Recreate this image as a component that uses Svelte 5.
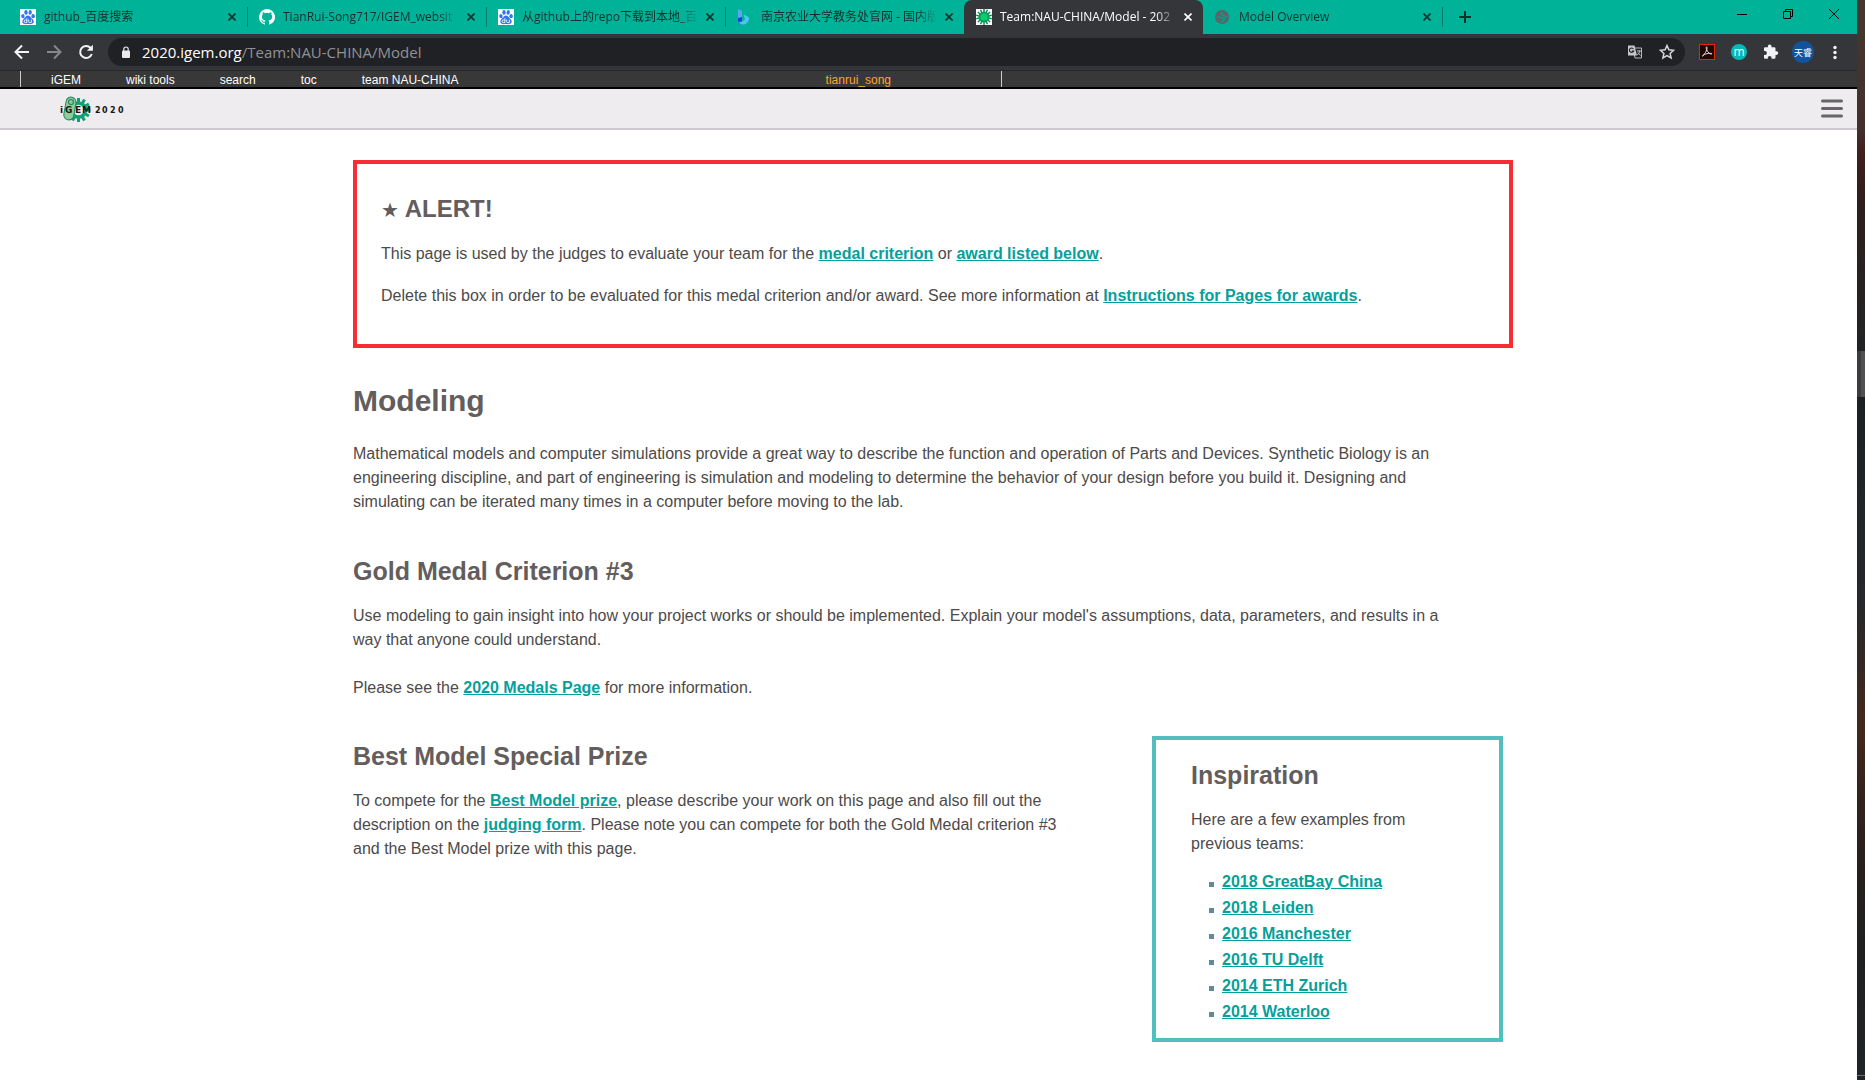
<script>
  const tabs = [
    { title: 'github_百度搜索', icon: 'paw' },
    { title: 'TianRui-Song717/IGEM_websit', icon: 'octo' },
    { title: '从github上的repo下载到本地_百', icon: 'paw' },
    { title: '南京农业大学教务处官网 - 国内版', icon: 'bing' },
    { title: 'Team:NAU-CHINA/Model - 202', icon: 'virus', active: true },
    { title: 'Model Overview', icon: 'globe' }
  ];
  const wikiLinks = ['iGEM', 'wiki tools', 'search', 'toc', 'team NAU-CHINA'];
  const examples = [
    '2018 GreatBay China',
    '2018 Leiden',
    '2016 Manchester',
    '2016 TU Delft',
    '2014 ETH Zurich',
    '2014 Waterloo'
  ];
  const spikes = Array.from({ length: 14 }, (_, i) => (i * 360) / 14);
  const teeth = Array.from({ length: 12 }, (_, i) => i * 30);
</script>

<div class="screen">
  <div class="window">
    <div class="tabstrip">
      <div class="tabs">
        {#each tabs as tab}
          <div class="tab" class:active={tab.active}>
            <svg class="favicon" viewBox="0 0 16 16" aria-hidden="true">
              {#if tab.icon === 'paw'}
                <rect width="16" height="16" fill="#fff" />
                <g fill="#3275ec">
                  <ellipse cx="2.9" cy="7.2" rx="1.7" ry="2.1" transform="rotate(-12 2.9 7.2)" />
                  <ellipse cx="6" cy="3.4" rx="1.7" ry="2.3" />
                  <ellipse cx="10.2" cy="3.4" rx="1.6" ry="2.3" transform="rotate(12 10.2 3.4)" />
                  <ellipse cx="13.1" cy="7.2" rx="1.7" ry="2.1" />
                  <path d="M8 6.6c1.9 0 2.5 1.9 3.9 3 1.700 1.300 2.100 2.600 1.600 4-.7 1.900-2.900 1.500-5.500 1.500s-4.800.4-5.500-1.500c-.5-1.400 0-2.700 1.600-4C5.500 8.500 6.100 6.600 8 6.600z" />
                </g>
                <path d="M6.900 9.300v4.300H5.500q-1.400 0-1.400-1.300t1.400-1.300h1.300M8.700 10.600v2.100q0 .9.900.9h1.800v-3" fill="none" stroke="#fff" stroke-width=".9" />
              {:else if tab.icon === 'octo'}
                <path fill="#fff" d="M8 0a8 8 0 0 0-2.530 15.590c.4.070.550-.170.550-.380v-1.490c-2.010.370-2.530-.490-2.690-.940-.090-.230-.480-.940-.820-1.130-.280-.150-.680-.520-.010-.530.630-.010 1.080.580 1.230.820.720 1.210 1.870.870 2.330.660.070-.520.280-.870.510-1.070-1.780-.2-3.640-.890-3.640-3.950 0-.870.310-1.590.820-2.150-.080-.2-.360-1.020.080-2.120 0 0 .670-.210 2.200.820a7.600 7.600 0 0 1 4 0c1.530-1.040 2.200-.820 2.200-.820.440 1.100.160 1.920.080 2.120.510.560.820 1.270.820 2.150 0 3.070-1.870 3.750-3.650 3.950.290.250.540.730.540 1.480v2.200c0 .210.150.460.550.380A8 8 0 0 0 8 0z" />
              {:else if tab.icon === 'bing'}
                <path d="M1 0l4 2v11.500L1 11z" fill="#5aa5f5" />
                <path d="M1 9l4-1v6l2 1.500q-5 .8-6-3.500z" fill="#1c3fdc" />
                <path d="M6.500 5.500l4 2q2.500 1.500 1 4.500-2 3.500-6.500 3.800-3-.8-3.500-3 3 1 6.500-2.300z" fill="#4cc6ee" />
              {:else if tab.icon === 'virus'}
                <rect width="16" height="16" fill="#fff" />
                {#each spikes as a}
                  <path d="M8 0v4" stroke="#0c8f5c" stroke-width="1.500" transform="rotate({a} 8 8)" />
                {/each}
                <circle cx="8" cy="8" r="5.600" fill="#0c9c60" />
                <circle cx="8" cy="8" r="3.600" fill="#07cf70" />
              {:else}
                <circle cx="7" cy="8" r="7" fill="#5f6368" />
                <path d="M2 8h3.500l1.500 1.500h2.500q0 2.500-2.500 3l-1.500 1" fill="none" stroke="#00a088" stroke-width="1.600" />
                <path d="M7.500 3q-2.500 2 0 3t1.500 1.500 3.500.5" fill="none" stroke="#00a088" stroke-width="1.600" />
              {/if}
            </svg>
            <span class="title">{tab.title}</span>
            <button class="close" aria-label="Close tab">
              <svg viewBox="0 0 8 8"><path d="M.5.5l7 7M7.500.5l-7 7" /></svg>
            </button>
          </div>
        {/each}
        <button class="newtab" aria-label="New tab">
          <svg viewBox="0 0 12 12"><path d="M6 0v12M0 6h12" /></svg>
        </button>
      </div>
      <div class="controls">
        <button aria-label="Minimize"><svg viewBox="0 0 12 12"><path d="M1 6.500h10" /></svg></button>
        <button aria-label="Restore"><svg viewBox="0 0 12 12"><path d="M1.500 3.500h7v7h-7zM3.500 3.500v-2h7v7h-2" /></svg></button>
        <button aria-label="Close"><svg viewBox="0 0 12 12"><path d="M1 1l10 10M11 1L1 11" /></svg></button>
      </div>
    </div>

    <div class="toolbar">
      <button class="nav" aria-label="Back"><svg viewBox="0 0 16 16"><path d="M15 8H2M8 1.500L1.500 8 8 14.500" /></svg></button>
      <button class="nav dim" aria-label="Forward"><svg viewBox="0 0 16 16"><path d="M1 8h13M8 1.500L14.500 8 8 14.500" /></svg></button>
      <button class="nav" aria-label="Reload"><svg viewBox="0 0 16 16"><path d="M13.800 10A6 6 0 1 1 12.500 3.800L14 5.500" /><path d="M14.900.8v6H8.900z" class="solid" /></svg></button>
      <div class="omnibox">
        <svg class="lock" viewBox="0 0 10 13" aria-hidden="true"><rect x="1" y="4.500" width="8" height="7.500" rx="1" fill="#e8eaed" /><path d="M2.800 5V3.200a2.200 2.200 0 0 1 4.400 0V5" fill="none" stroke="#e8eaed" stroke-width="1.200" /></svg>
        <span class="url"><b>2020.igem.org</b>/Team:NAU-CHINA/Model</span>
        <button class="tool" aria-label="Translate">
          <svg viewBox="0 0 16 16">
            <path d="M6 4h8.500v10H8z" fill="none" stroke="#b5b7ba" />
            <path d="M1 1.500h6.500l2.500 10H1z" fill="#c4c6c8" />
            <path d="M6.500 5A2.200 2.200 0 1 0 6.700 7H4.800" fill="none" stroke="#202124" stroke-width="1.100" />
            <path d="M10 7h4M12 6v1M13 7q-.5 2.500-3 4M10.800 8.500l2.700 3" fill="none" stroke="#b5b7ba" />
          </svg>
        </button>
        <button class="tool" aria-label="Bookmark">
          <svg viewBox="0 0 16 16"><path d="M8 1.500l1.900 4.300 4.700.5-3.500 3.100 1 4.600L8 11.600 3.900 14l1-4.600L1.400 6.300l4.700-.5z" fill="none" stroke="#d5d7da" stroke-width="1.500" /></svg>
        </button>
      </div>
      <div class="extensions">
        <button class="tool" aria-label="PDF"><svg viewBox="0 0 16 16"><rect x=".5" y=".5" width="15" height="15" fill="#210503" stroke="#e02508" /><path d="M3 12.500c2-1 5.500-6.500 5-9.300-.8-.9-1.200.6-.3 2.600 1.100 2.600 3.300 4.700 5.300 4.200.5-1.200-6.500-.8-9.300 1.400" fill="none" stroke="#ddd" /></svg></button>
        <button class="tool badge" aria-label="Extension">m</button>
        <button class="tool" aria-label="Extensions"><svg viewBox="0 0 16 16"><path d="M13.500 7.300h-1V4.600q0-1.300-1.300-1.300H8.500v-1a1.800 1.800 0 0 0-3.600 0v1H2.300Q1 3.300 1 4.600v2.500h1a1.900 1.900 0 0 1 0 3.800H1v2.600q0 1.300 1.300 1.300h2.500v-1a1.900 1.900 0 0 1 3.800 0v1h2.600q1.300 0 1.300-1.300v-2.600h1a1.800 1.800 0 0 0 0-3.600z" fill="#f1f3f4" /></svg></button>
        <button class="tool avatar" aria-label="Profile">天睿</button>
        <button class="tool" aria-label="Menu"><svg viewBox="0 0 16 16"><g fill="#f1f3f4"><circle cx="8" cy="3.500" r="1.700" /><circle cx="8" cy="8.500" r="1.700" /><circle cx="8" cy="13.500" r="1.700" /></g></svg></button>
      </div>
    </div>

    <nav class="wikibar">
      <div class="wikiinner">
        <div class="wikilinks">
          {#each wikiLinks as label}<a href="#top">{label}</a>{/each}
        </div>
        <a class="user" href="#user">tianrui_song</a>
      </div>
    </nav>

    <header class="sitebar">
      <a class="logo" href="#home" aria-label="iGEM 2020">
        <svg viewBox="0 0 66 26">
          <g fill="#10a074">
            {#each teeth as a}
              <rect x="17" y="2" width="3" height="6" transform="rotate({a} 18.500 14)" />
            {/each}
          </g>
          <circle cx="18.500" cy="14" r="7" fill="none" stroke="#10a074" stroke-width="3.500" />
          <rect x="5" y="1" width="10" height="23" rx="5" fill="#8fcb9b" stroke="#24875a" transform="rotate(10 10 12)" />
          <circle cx="11" cy="6" r="2.500" fill="none" stroke="#24875a" stroke-width="1.200" />
          <g fill="#161616" font-family="DejaVu Sans, sans-serif" font-weight="700" font-size="9">
            <text x="0" y="17">i</text><text x="5" y="17">G</text><text x="15" y="17">E</text><text x="22" y="17">M</text>
          </g>
          <g fill="#161616" font-family="DejaVu Sans, sans-serif" font-weight="700" font-size="8">
            <text x="35" y="17">2</text><text x="42" y="17">0</text><text x="50" y="17">2</text><text x="58" y="17">0</text>
          </g>
        </svg>
      </a>
      <button class="burger" aria-label="Open menu"><svg viewBox="0 0 22 19"><path d="M1.500 2h19M1.500 9.500h19M1.500 17h19" /></svg></button>
    </header>

    <main>
      <section class="alert">
        <h2><span class="star">★</span> ALERT!</h2>
        <p>This page is used by the judges to evaluate your team for the <a href="#medal">medal criterion</a> or <a href="#award">award listed below</a>.</p>
        <p>Delete this box in order to be evaluated for this medal criterion and/or award. See more information at <a href="#instructions">Instructions for Pages for awards</a>.</p>
      </section>

      <section class="intro">
        <h1>Modeling</h1>
        <p>Mathematical models and computer simulations provide a great way to describe the function and operation of Parts and Devices. Synthetic Biology is an engineering discipline, and part of engineering is simulation and modeling to determine the behavior of your design before you build it. Designing and simulating can be iterated many times in a computer before moving to the lab.</p>
      </section>

      <section class="gold">
        <h2>Gold Medal Criterion #3</h2>
        <p>Use modeling to gain insight into how your project works or should be implemented. Explain your model's assumptions, data, parameters, and results in a way that anyone could understand.<br /><br />Please see the <a href="#medals">2020 Medals Page</a> for more information.</p>
      </section>

      <div class="columns">
        <section class="prize">
          <h2>Best Model Special Prize</h2>
          <p>To compete for the <a href="#prize">Best Model prize</a>, please describe your work on this page and also fill out the description on the <a href="#form">judging form</a>. Please note you can compete for both the Gold Medal criterion #3 and the Best Model prize with this page.</p>
        </section>
        <aside>
          <h2>Inspiration</h2>
          <p>Here are a few examples from previous teams:</p>
          <ul>
            {#each examples as name}<li><a href="#example">{name}</a></li>{/each}
          </ul>
        </aside>
      </div>
    </main>
  </div>
  <div class="desktop"><div class="peek"></div><div class="edge"></div></div>
</div>

<style>
  :global(body) { margin: 0; background: #fff; }
  * { box-sizing: border-box; }
  button { border: 0; padding: 0; margin: 0; background: none; color: inherit; font: inherit; display: flex; align-items: center; justify-content: center; }
  svg { display: block; }
  .screen { display: flex; min-height: 100vh; font-family: "Liberation Sans", Arial, sans-serif; }
  .window { flex: 1; min-width: 0; background: #fff; }
  .desktop { display: flex; flex-direction: column; justify-content: space-between; width: 8px; padding: 351px 0 4px; background: linear-gradient(#45372f 0, #43302a 130px, #401f1c 155px, #2e1e1c 200px, #232324 330px, #1c2025 400px, #25272b 600px, #42281c 720px, #2a1f1c 850px, #1f1f20 950px, #202426 100%); }
  .peek { height: 46px; background: #505052; border-left: 4px solid #3c3c3e; }
  .edge { height: 1px; background: #6c7072; }

  .tabstrip, .toolbar { font-family: "Open Sans", "Noto Sans CJK SC", sans-serif; }
  .tabstrip { display: flex; justify-content: space-between; height: 34px; background: #00b398; color: #15302c; }
  .tabs { display: flex; padding-left: 8px; min-width: 0; }
  .tab { position: relative; display: flex; align-items: center; width: 239px; height: 34px; padding: 0 7px 0 12px; font-size: 12px; }
  .tab::after { content: ""; position: absolute; right: -1px; top: 7px; width: 1px; height: 20px; background: #087c6c; }
  .tab.active { background: #35363a; color: #fff; border-radius: 8px 8px 0 0; }
  .tab.active::after, .tab:has(+ .active)::after { display: none; }
  .favicon { width: 16px; height: 16px; flex: none; }
  .title { flex: 1; margin: 0 4px 0 8px; overflow: hidden; white-space: nowrap; line-height: 20px; mask-image: linear-gradient(to right, #000 calc(100% - 20px), transparent); }
  .close { width: 16px; height: 16px; flex: none; }
  .close svg { width: 8px; height: 8px; }
  .close path { stroke: currentColor; stroke-width: 1.6; }
  .newtab { width: 46px; }
  .newtab svg { width: 12px; height: 12px; }
  .newtab path { stroke: currentColor; stroke-width: 2; }
  .controls { display: flex; height: 28px; }
  .controls button { width: 46px; }
  .controls svg { width: 12px; height: 12px; }
  .controls path { stroke: #000; fill: none; }

  .toolbar { display: flex; align-items: center; height: 36px; padding: 0 6px; background: #35363a; }
  .nav { width: 32px; height: 28px; }
  .nav svg { width: 16px; height: 16px; }
  .nav path { fill: none; stroke: #f1f3f4; stroke-width: 2; }
  .nav.dim path { stroke: #86888b; }
  .nav path.solid { fill: #f1f3f4; stroke: none; }
  .omnibox { flex: 1; display: flex; align-items: center; height: 28px; margin: 0 6px; padding: 0 2px 0 13px; border-radius: 14px; background: #202124; }
  .lock { width: 10px; height: 13px; margin-right: 11px; }
  .url { flex: 1; font-size: 15px; line-height: 20px; color: #8f9296; }
  .url b { font-weight: 400; color: #fff; }
  .tool { width: 32px; height: 28px; }
  .tool svg { width: 16px; height: 16px; }
  .extensions { display: flex; align-items: center; }
  .badge { width: 16px; height: 16px; margin: 0 8px; border-radius: 8px; background: #06b8b8; color: #fff; font-size: 12px; line-height: 14px; }
  .avatar { width: 22px; height: 22px; margin: 0 5px; border-radius: 11px; background: #11549c; color: #fff; font-size: 9px; }

  .wikibar { height: 19px; background: #383838; border-top: 1px solid #282828; border-bottom: 2px solid #000; padding-left: 20px; font-size: 12px; line-height: 18px; }
  .wikiinner { display: flex; justify-content: space-between; width: 982px; max-width: 100%; height: 16px; border: 0 solid #ccc; border-width: 0 1px; padding: 0 110px 0 30px; }
  .wikilinks { display: flex; gap: 45px; }
  .wikibar a { color: #fff; text-decoration: none; }
  .wikibar .user { color: #f9a72b; }

  .sitebar { display: flex; justify-content: space-between; align-items: center; height: 41px; padding: 0 14px 0 60px; background: #eeecef; border-bottom: 2px solid #cdc7cf; }
  .logo svg { width: 66px; height: 26px; }
  .burger svg { width: 22px; height: 19px; }
  .burger path { stroke: #68646a; stroke-width: 3; stroke-linecap: round; }

  main { width: 62%; max-width: 1151px; margin: 0 auto; color: #4d4a4a; font-size: 16px; line-height: 24px; }
  h1, h2, p { margin: 0; }
  h1, h2 { color: #635d5d; font-weight: 700; }
  h1 { font-size: 30px; line-height: 36px; }
  h2 { font-size: 25px; line-height: 30px; margin-bottom: 18px; }
  main a { color: #05a09b; font-weight: 700; text-decoration: underline; }
  .alert { margin: 30px -9px 0 0; border: 4px solid #f72c34; padding: 30px 24px 36px; }
  .alert h2 { font-size: 24px; }
  .alert p + p { margin-top: 18px; }
  .star { font-family: "DejaVu Sans", sans-serif; font-size: 20px; line-height: 20px; }
  .intro { margin-top: 35px; }
  .intro h1 { margin-bottom: 23px; }
  .intro p, .gold p { max-width: 1100px; }
  .gold { margin-top: 42px; }
  .columns { display: flex; justify-content: space-between; align-items: flex-start; margin: 36px 1px 0 0; }
  .prize { flex: 0 1 720px; margin-top: 5px; }
  aside { width: 351px; border: 4px solid #54bebe; padding: 20px 35px 13px; }
  aside p { max-width: 250px; }
  ul { margin: 13px 0 0; padding: 0; }
  li { display: flex; align-items: center; gap: 8px; padding-left: 18px; line-height: 26px; }
  li::before { content: ""; width: 5px; height: 5px; margin-top: 4px; background: #628a9c; }
</style>
